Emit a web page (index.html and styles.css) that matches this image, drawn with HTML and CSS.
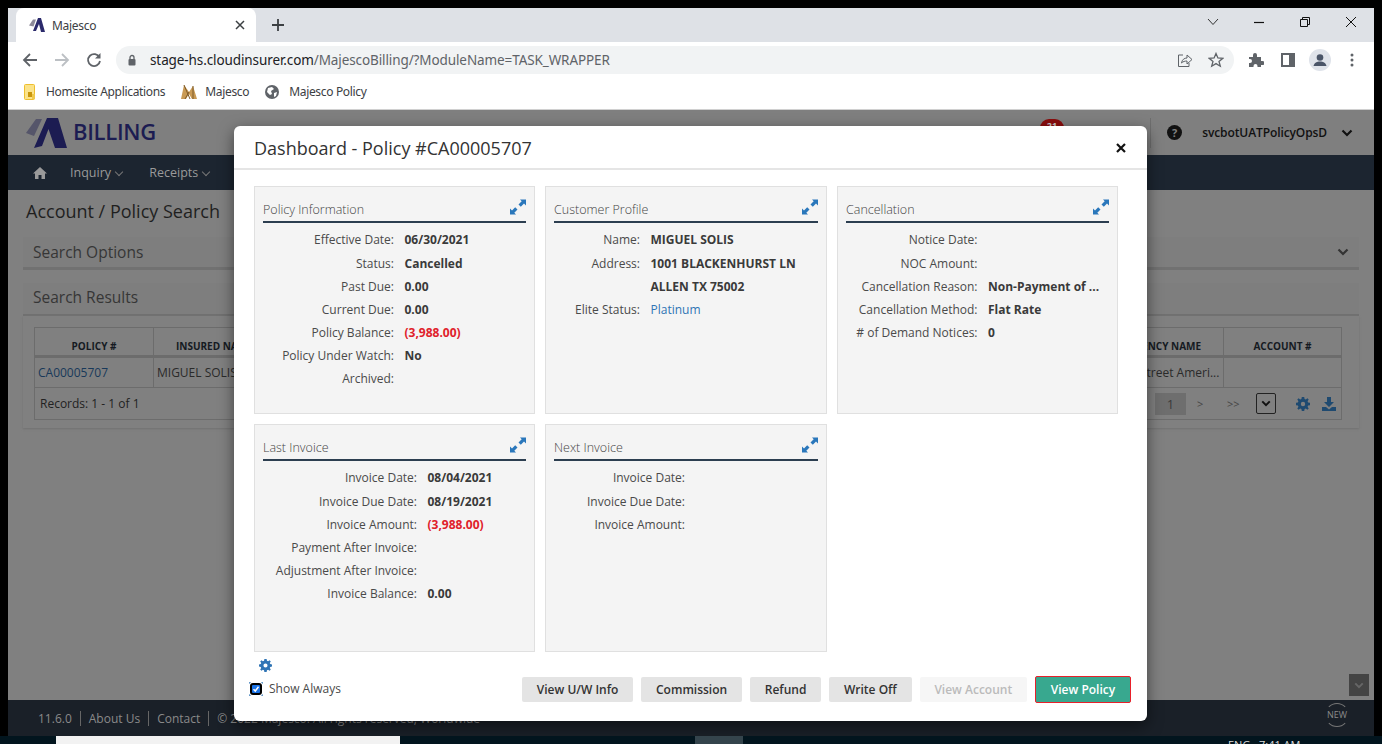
FILE: index.html
```html
<!DOCTYPE html>
<html lang="en">
<head>
    <meta charset="UTF-8">
    <title>Majesco</title>
    <link rel="stylesheet" href="styles.css">
</head>
<body>
<div class="screen">
    <div class="window">
        <div class="tabstrip">
            <div class="tab">
                <svg class="tab-logo" width="18" height="16" viewBox="0 0 18 16"><path d="M1 8.500 5 2.500 8 2.500 5.500 9.500z" fill="#8d8a99"/><path d="M5 14 10 1 13 1 17 15 13 15 11 7 8 14z" fill="#2b2a6b"/></svg>
                <span class="tab-title">Majesco</span>
                <svg class="tab-close" width="10" height="10" viewBox="0 0 10 10"><path d="M1 1 9 9M9 1 1 9" stroke="#3c4043" stroke-width="1.500"/></svg>
            </div>
            <svg class="new-tab" width="14" height="14" viewBox="0 0 14 14"><path d="M7 1V13M1 7H13" stroke="#3c4043" stroke-width="1.800"/></svg>
            <div class="win-controls">
                <svg width="12" height="8" viewBox="0 0 12 8"><path d="M1 1 6 6.500 11 1" stroke="#333" fill="none"/></svg>
                <svg width="12" height="12" viewBox="0 0 12 12"><path d="M1 6.500H11" stroke="#111" stroke-width="1.200"/></svg>
                <svg width="12" height="12" viewBox="0 0 12 12"><path d="M1.500 3.500H8.500V10.500H1.500zM3.500 3.500V1.500H10.500V8.500H8.500" stroke="#111" fill="none"/></svg>
                <svg width="12" height="12" viewBox="0 0 12 12"><path d="M1 1 11 11M11 1 1 11" stroke="#111"/></svg>
            </div>
        </div>
        <div class="toolbar">
            <svg class="nav-btn" width="16" height="16" viewBox="0 0 16 16"><path d="M15 8H2M8 2 2 8l6 6" stroke="#5f6368" stroke-width="1.800" fill="none"/></svg>
            <svg class="nav-btn" width="16" height="16" viewBox="0 0 16 16"><path d="M1 8H14M8 2l6 6-6 6" stroke="#bcc0c4" stroke-width="1.800" fill="none"/></svg>
            <svg class="nav-btn" width="16" height="16" viewBox="0 0 16 16"><path d="M13.500 5.500A6 6 0 1 0 14 9" stroke="#5f6368" stroke-width="1.800" fill="none"/><path d="M14.500 1V6.500H9z" fill="#5f6368"/></svg>
            <div class="omnibox">
                <svg width="10" height="12" viewBox="0 0 10 12"><path d="M3 5V3.500a2 2 0 0 1 4 0V5" stroke="#5f6368" stroke-width="1.300" fill="none"/><rect x="1.500" y="5" width="7" height="6.500" rx="1" fill="#5f6368"/></svg>
                <span class="url"><span class="url-host">stage-hs.cloudinsurer.com</span>/MajescoBilling/?ModuleName=TASK_WRAPPER</span>
                <svg class="omni-share" width="16" height="16" viewBox="0 0 16 16"><path d="M6 3H1.500V14.500H12V11" stroke="#5f6368" fill="none"/><path d="M4.500 11C5 7.500 7.500 6 10 6V3l5 4.500-5 4.500V9C8 9 6 9.500 4.500 11z" stroke="#5f6368" fill="none"/></svg>
                <svg width="16" height="16" viewBox="0 0 16 16"><path d="M8 1.500 9.900 6 14.800 6.300 11 9.400 12.300 14.200 8 11.600 3.700 14.200 5 9.400 1.200 6.300 6.100 6z" stroke="#5f6368" stroke-width="1.300" fill="none"/></svg>
            </div>
            <div class="toolbar-right">
                <svg width="16" height="16" viewBox="0 0 16 16"><path d="M1 5H5V3a2 2 0 0 1 4 0V5h4V9h1.500a2 2 0 0 1 0 4H13v2H9.500v-1a2 2 0 0 0-4 0v1H1V11h1a2 2 0 0 0 0-4H1z" fill="#5f6368"/></svg>
                <svg class="tool-side" width="14" height="14" viewBox="0 0 14 14"><path d="M0 0H14V14H0zM2 2V12H8V2z" fill="#5f6368" fill-rule="evenodd"/></svg>
                <svg class="tool-avatar" width="22" height="22" viewBox="0 0 22 22"><circle cx="11" cy="11" r="11" fill="#dfe3ea"/><circle cx="11" cy="8.500" r="3.300" fill="#4a5568"/><path d="M4.500 17c1-3.500 3.500-4.500 6.500-4.500s5.500 1 6.500 4.500z" fill="#4a5568"/></svg>
                <svg class="tool-menu" width="4" height="14" viewBox="0 0 4 14"><circle cx="2" cy="2" r="1.500" fill="#5f6368"/><circle cx="2" cy="7" r="1.500" fill="#5f6368"/><circle cx="2" cy="12" r="1.500" fill="#5f6368"/></svg>
            </div>
        </div>
        <div class="bookmarks">
            <span class="bookmark">
                <svg class="bm-wide" width="12" height="16" viewBox="0 0 12 16"><rect x="0.500" y="0.500" width="10" height="15" rx="1" fill="#fbe38a" stroke="#eebf2e"/><rect x="4" y="8" width="4" height="5" fill="#c9960c"/><rect x="8" y="10" width="3" height="5" fill="#f0c94a"/></svg>
                Homesite Applications
            </span>
            <span class="bookmark">
                <svg width="16" height="16" viewBox="0 0 16 16"><path d="M0 15 3 1 8 8 12 2 16 15 11 15 8 10 5 15z" fill="#c99a54"/><path d="M3 1 9 15M8 8 4 15M12 2 12 15" stroke="#7d5a2a" fill="none"/></svg>
                Majesco
            </span>
            <span class="bookmark">
                <svg class="bm-wide" width="14" height="14" viewBox="0 0 14 14"><circle cx="7" cy="7" r="7" fill="#5f6368"/><path d="M3 3 7 2 9 4 6 6 7 9 5 10 2 7zM9 8 12 7 11 11 9 12z" fill="#fff"/></svg>
                Majesco Policy
            </span>
        </div>
        <div class="app">
            <header class="app-header">
                <svg width="44" height="32" viewBox="0 0 44 32"><path d="M1 16 11 2 17 2 9 19z" fill="#55556a"/><path d="M9 31 22 1 33 1 42 31 30 31 23.500 12 17 29z" fill="#1c1c52"/></svg>
                <span class="app-name">BILLING</span>
                <span class="header-input input-a"></span>
                <span class="header-input input-b"></span>
                <div class="header-right">
                    <span class="badge">21</span>
                    <span class="divider"></span>
                    <span class="help">?</span>
                    <span class="user">svcbotUATPolicyOpsD</span>
                    <svg width="12" height="8" viewBox="0 0 12 8"><path d="M1.500 1.500 6 6l4.500-4.500" stroke="#111" stroke-width="2.200" fill="none"/></svg>
                </div>
            </header>
            <nav class="app-nav">
                <svg width="14" height="12" viewBox="0 0 14 12"><path d="M7 0 14 6.500H12V12H8.500V8h-3v4H2V6.500H0z" fill="#9a9a9a"/></svg>
                <span class="nav-item">Inquiry <i class="caret"></i></span>
                <span class="nav-item">Receipts <i class="caret"></i></span>
            </nav>
            <main class="app-main">
                <h1 class="page-title">Account / Policy Search</h1>
                <section class="bar bar-options">
                    <span>Search Options</span>
                    <svg width="12" height="8" viewBox="0 0 12 8"><path d="M1.500 1.500 6 6l4.500-4.500" stroke="#333" stroke-width="2.200" fill="none"/></svg>
                </section>
                <section class="bar bar-results"><span>Search Results</span></section>
                <section class="results">
                    <div class="grid">
                        <div class="grid-row grid-head">
                            <div class="cell c-policy">POLICY #</div>
                            <div class="cell c-insured">INSURED NAME</div>
                            <div class="cell c-agency">AGENCY NAME</div>
                            <div class="cell c-account">ACCOUNT #</div>
                        </div>
                        <div class="grid-row grid-body">
                            <div class="cell c-policy link">CA00005707</div>
                            <div class="cell c-insured">MIGUEL SOLIS</div>
                            <div class="cell c-agency">Main Street Ameri...</div>
                            <div class="cell c-account"></div>
                        </div>
                        <div class="grid-foot">
                            <span>Records: 1 - 1 of 1</span>
                            <div class="pager">
                                <span class="page-no">1</span>
                                <span class="page-arrow">&gt;</span>
                                <span class="page-arrow">&gt;&gt;</span>
                                <span class="page-select"><svg width="10" height="7" viewBox="0 0 12 8"><path d="M1.500 1.500 6 6l4.500-4.500" stroke="#111" stroke-width="2.400" fill="none"/></svg></span>
                                <svg width="14" height="14" viewBox="0 0 14 14"><use href="#gear" fill="#1f4a70"/></svg>
                                <svg width="14" height="14" viewBox="0 0 14 14"><path d="M5 0H9V5H12L7 10 2 5H5zM0 10H4L7 12.500 10 10H14V14H0z" fill="#1f4a70"/></svg>
                            </div>
                        </div>
                    </div>
                </section>
            </main>
            <footer class="app-footer">
                <span>11.6.0</span><span>About Us</span><span>Contact</span><span>&copy; 2022 Majesco. All rights reserved, Worldwide</span>
                <span class="new-mark">NEW</span>
            </footer>
            <span class="scroll-top"><svg width="10" height="7" viewBox="0 0 12 8"><path d="M1.500 1.500 6 6l4.500-4.500" stroke="#666" stroke-width="2.400" fill="none"/></svg></span>

            <div class="modal">
                <div class="modal-head">
                    <h2>Dashboard - Policy #CA00005707</h2>
                    <svg width="10" height="10" viewBox="0 0 10 10"><path d="M1 1 9 9M9 1 1 9" stroke="#111" stroke-width="2.200"/></svg>
                </div>
                <div class="panels">
                    <div class="panel">
                        <div class="panel-title">Policy Information<svg width="16" height="16" viewBox="0 0 16 16"><use href="#expand"/></svg></div>
                        <dl class="facts w-policy">
                            <dt>Effective Date:</dt><dd>06/30/2021</dd>
                            <dt>Status:</dt><dd>Cancelled</dd>
                            <dt>Past Due:</dt><dd>0.00</dd>
                            <dt>Current Due:</dt><dd>0.00</dd>
                            <dt>Policy Balance:</dt><dd class="neg">(3,988.00)</dd>
                            <dt>Policy Under Watch:</dt><dd>No</dd>
                            <dt>Archived:</dt><dd></dd>
                        </dl>
                    </div>
                    <div class="panel">
                        <div class="panel-title">Customer Profile<svg width="16" height="16" viewBox="0 0 16 16"><use href="#expand"/></svg></div>
                        <dl class="facts w-customer">
                            <dt>Name:</dt><dd>MIGUEL SOLIS</dd>
                            <dt>Address:</dt><dd>1001 BLACKENHURST LN</dd>
                            <dt></dt><dd>ALLEN TX 75002</dd>
                            <dt>Elite Status:</dt><dd class="plain">Platinum</dd>
                        </dl>
                    </div>
                    <div class="panel">
                        <div class="panel-title">Cancellation<svg width="16" height="16" viewBox="0 0 16 16"><use href="#expand"/></svg></div>
                        <dl class="facts w-cancel">
                            <dt>Notice Date:</dt><dd></dd>
                            <dt>NOC Amount:</dt><dd></dd>
                            <dt>Cancellation Reason:</dt><dd>Non-Payment of ...</dd>
                            <dt>Cancellation Method:</dt><dd>Flat Rate</dd>
                            <dt># of Demand Notices:</dt><dd>0</dd>
                        </dl>
                    </div>
                    <div class="panel">
                        <div class="panel-title">Last Invoice<svg width="16" height="16" viewBox="0 0 16 16"><use href="#expand"/></svg></div>
                        <dl class="facts w-invoice">
                            <dt>Invoice Date:</dt><dd>08/04/2021</dd>
                            <dt>Invoice Due Date:</dt><dd>08/19/2021</dd>
                            <dt>Invoice Amount:</dt><dd class="neg">(3,988.00)</dd>
                            <dt>Payment After Invoice:</dt><dd></dd>
                            <dt>Adjustment After Invoice:</dt><dd></dd>
                            <dt>Invoice Balance:</dt><dd>0.00</dd>
                        </dl>
                    </div>
                    <div class="panel">
                        <div class="panel-title">Next Invoice<svg width="16" height="16" viewBox="0 0 16 16"><use href="#expand"/></svg></div>
                        <dl class="facts w-next">
                            <dt>Invoice Date:</dt><dd></dd>
                            <dt>Invoice Due Date:</dt><dd></dd>
                            <dt>Invoice Amount:</dt><dd></dd>
                        </dl>
                    </div>
                </div>
                <div class="modal-foot">
                    <div class="foot-left">
                        <svg class="foot-gear" width="13" height="13" viewBox="0 0 14 14"><use href="#gear" fill="#2f74b5"/></svg>
                        <label class="show-always">
                            <svg class="check" width="14" height="14" viewBox="0 0 14 14">
                                <path d="M0 2V0H2M12 0H14V2M14 12V14H12M2 14H0V12" stroke="#2f74b5" fill="none"/>
                                <rect x="1" y="1" width="12" height="12" rx="3" fill="#000"/>
                                <rect x="3" y="3" width="8" height="8" rx="1" fill="#1a73e8"/>
                                <path d="M4.500 7.200 6.300 9 9.500 4.800" stroke="#fff" stroke-width="1.500" fill="none"/>
                            </svg>
                            Show Always
                        </label>
                    </div>
                    <div class="foot-buttons">
                        <button class="btn">View U/W Info</button>
                        <button class="btn">Commission</button>
                        <button class="btn">Refund</button>
                        <button class="btn">Write Off</button>
                        <button class="btn btn-disabled">View Account</button>
                        <button class="btn btn-primary">View Policy</button>
                    </div>
                </div>
            </div>
        </div>
    </div>
    <div class="taskbar">
        <span class="task-search"></span>
        <span class="task-active"></span>
        <span class="task-clock">ENG &nbsp; 7:41 AM</span>
    </div>
</div>

<svg class="sprites" width="0" height="0">
    <symbol id="expand" viewBox="0 0 16 16">
        <path d="M10 0.500H16V6.500L14 4.500 10.800 7.700 8.500 5.400 11.700 2.200zM6 15.500H0V9.500L2 11.500 5.200 8.300 7.500 10.600 4.300 13.800z" fill="#2a77bb"/>
    </symbol>
    <symbol id="gear" viewBox="0 0 14 14">
        <path fill-rule="evenodd" d="M5.800 0H8.200L8.600 1.900 9.800 2.400 11.400 1.300 12.700 2.600 11.600 4.200 12.100 5.400 14 5.800V8.200L12.100 8.600 11.600 9.800 12.700 11.400 11.400 12.700 9.800 11.600 8.600 12.100 8.200 14H5.800L5.400 12.100 4.200 11.600 2.600 12.700 1.300 11.400 2.400 9.800 1.900 8.600 0 8.200V5.800L1.900 5.400 2.400 4.200 1.300 2.600 2.600 1.300 4.200 2.400 5.400 1.900zM7 4.800A2.200 2.200 0 1 0 7 9.200 2.200 2.200 0 1 0 7 4.800z"/>
    </symbol>
</svg>
</body>
</html>
```

FILE: styles.css
```css
* {
    box-sizing: border-box;
}

html,
body {
    margin: 0;
    padding: 0;
    height: 100%;
    overflow: hidden;
    background-color: #000;
}

body {
    font-family: "Open Sans", Arial, sans-serif;
    font-size: 12px;
    color: #333;
}

.sprites {
    position: absolute;
}

.screen {
    width: 1382px;
    height: 744px;
    display: flex;
    flex-direction: column;
    padding-top: 8px;
}

.window {
    width: 1366px;
    height: 728px;
    margin-left: 8px;
    display: flex;
    flex-direction: column;
    flex: none;
}

/* browser chrome */
.tabstrip {
    height: 34px;
    background-color: #dee1e6;
    display: flex;
    align-items: flex-end;
    padding-left: 8px;
    flex: none;
}

.tab {
    width: 240px;
    height: 34px;
    background-color: #fff;
    border-radius: 8px 8px 0 0;
    display: flex;
    align-items: center;
    padding: 0 11px 0 12px;
    font-size: 12px;
    color: #3c4043;
}

.tab-logo {
    margin-right: 6px;
}

.tab-title {
    flex: 1;
    font-family: "Noto Sans", sans-serif;
    letter-spacing: -0.300px;
}

.new-tab {
    margin: 0 0 10px 15px;
}

.win-controls {
    margin-left: auto;
    display: flex;
    align-items: center;
    gap: 34px;
    height: 28px;
    padding-right: 17px;
    align-self: flex-start;
}

.toolbar {
    height: 40px;
    background-color: #fff;
    display: flex;
    align-items: center;
    padding: 0 0 4px 14px;
    gap: 16px;
    flex: none;
}

.omnibox {
    width: 1118px;
    height: 28px;
    margin-left: -2px;
    background-color: #f1f3f4;
    border-radius: 14px;
    display: flex;
    align-items: center;
    padding: 0 10px 0 11px;
    gap: 10px;
}

.url {
    flex: 1;
    margin-left: 3px;
    font-family: "Noto Sans", sans-serif;
    font-size: 13.500px;
    color: #5f6368;
    letter-spacing: -0.100px;
}

.url-host {
    color: #202124;
}

.omni-share {
    margin-right: 5px;
}

.toolbar-right {
    display: flex;
    align-items: center;
    margin-left: -2px;
}

.tool-side {
    margin-left: 17px;
}

.tool-avatar {
    margin-left: 14px;
}

.tool-menu {
    margin-left: 19px;
}

.bookmarks {
    height: 28px;
    background-color: #fff;
    display: flex;
    align-items: center;
    padding: 0 0 8px 16px;
    gap: 16px;
    flex: none;
    border-bottom: 1px solid #d0d0d0;
}

.bookmark {
    display: flex;
    align-items: center;
    gap: 8px;
    font-family: "Noto Sans", sans-serif;
    font-size: 12px;
    letter-spacing: -0.330px;
    color: #3c4043;
}

.bm-wide {
    margin-right: 2px;
}

/* app behind the dialog, dimmed */
.app {
    position: relative;
    flex: 1;
    display: flex;
    flex-direction: column;
    background-color: #808080;
    overflow: hidden;
}

.app-header {
    height: 45px;
    flex: none;
    background-color: #7f7f7f;
    display: flex;
    align-items: center;
    padding-left: 17px;
}

.app-name {
    font-size: 22px;
    font-weight: 600;
    color: #1c1c52;
    margin: 0 0 4px 4px;
    letter-spacing: -0.300px;
}

.header-input {
    height: 30px;
    margin-top: 26px;
    border: 1px solid #707070;
}

.input-a {
    width: 120px;
    margin-left: 466px;
}

.input-b {
    width: 192px;
    margin-left: 6px;
}

.header-right {
    margin-left: auto;
    display: flex;
    align-items: center;
    padding-right: 21px;
}

.badge {
    position: absolute;
    left: 1032px;
    top: 9px;
    width: 24px;
    height: 18px;
    background-color: #8a0d0d;
    border-radius: 9px;
    color: #ccc;
    font-size: 9px;
    font-weight: 700;
    text-align: center;
}

.divider {
    width: 1px;
    height: 30px;
    background-color: #6e6e6e;
    margin-right: 16px;
}

.help {
    width: 15px;
    height: 15px;
    background-color: #111;
    color: #808080;
    border-radius: 50%;
    font-size: 11px;
    font-weight: 700;
    text-align: center;
    line-height: 15px;
    margin-right: 20px;
}

.user {
    font-weight: 600;
    color: #111;
    margin-right: 14px;
    letter-spacing: -0.100px;
}

.app-nav {
    height: 35px;
    flex: none;
    background-color: #1c2530;
    display: flex;
    align-items: center;
    padding-left: 25px;
    color: #9a9a9a;
    font-size: 12.500px;
}

.nav-item {
    margin-left: 23px;
    margin-right: 2px;
}

.caret {
    display: inline-block;
    width: 6px;
    height: 6px;
    border-right: 1.500px solid #777;
    border-bottom: 1.500px solid #777;
    transform: rotate(45deg);
    margin: 0 2px 2px 2px;
}

.app-main {
    flex: 1;
    padding: 0 15px;
    background-color: #808080;
}

.page-title {
    margin: 0;
    font-size: 18px;
    font-weight: 400;
    line-height: 24px;
    padding: 9px 0 0 3px;
    color: #1f1f1f;
}

.bar {
    height: 33px;
    font-size: 15.500px;
    color: #363636;
    padding: 0 10px;
    display: flex;
    align-items: center;
    justify-content: space-between;
    background-color: #7e7e7e;
    border-bottom: 3px solid #717171;
}

.bar-options {
    margin-top: 14px;
}

.bar-results {
    margin-top: 13px;
    padding-bottom: 4px;
    border-bottom-width: 2px;
}

.results {
    height: 112px;
    padding: 11px 11px 0 11px;
    box-shadow: 0 1px 2px #707070;
}

.grid {
    width: 1308px;
    border: 1px solid #6c6c6c;
}

.grid-row {
    display: flex;
}

.grid-head {
    height: 30px;
    border-bottom: 3px solid #6c6c6c;
    font-size: 10px;
    font-weight: 700;
    color: #151a22;
    text-align: center;
}

.grid-body {
    height: 30px;
    border-bottom: 1px solid #6c6c6c;
    font-size: 12px;
    color: #2a2a2a;
}

.cell {
    border-right: 1px solid #6c6c6c;
    white-space: nowrap;
    overflow: hidden;
    padding: 0 3px;
    display: flex;
    align-items: center;
}

.grid-head .cell {
    justify-content: center;
    padding-top: 8px;
}

.c-policy {
    width: 119px;
}

.c-insured {
    width: 952px;
}

.grid-head .c-insured {
    justify-content: flex-start;
    padding-left: 22px;
}

.c-agency {
    width: 118px;
}

.c-account {
    flex: 1;
    border-right: none;
}

.link {
    color: #18395a;
}

.grid-foot {
    height: 31px;
    display: flex;
    align-items: center;
    justify-content: space-between;
    padding: 0 5px;
    color: #222;
}

.pager {
    display: flex;
    align-items: center;
    color: #444;
}

.page-no {
    width: 31px;
    height: 22px;
    background-color: #6e6e6e;
    text-align: center;
    line-height: 22px;
    color: #3a3a3a;
    font-size: 13px;
}

.page-arrow {
    margin-left: 11px;
    width: 19px;
    font-size: 11px;
}

.page-arrow + .page-arrow {
    width: 22px;
}

.page-select {
    width: 20px;
    height: 21px;
    border: 1px solid #222;
    border-radius: 2px;
    display: flex;
    align-items: center;
    justify-content: center;
    margin: 0 20px 0 7px;
}

.pager > svg:last-child {
    margin-left: 12px;
}

.app-footer {
    height: 36px;
    flex: none;
    background-color: #1a2028;
    display: flex;
    align-items: center;
    padding-left: 30px;
    color: #8a8a8a;
    font-size: 12px;
    position: relative;
}

.app-footer span {
    padding: 0 8px;
    border-left: 1px solid #666;
    line-height: 15px;
}

.app-footer span:first-child {
    border-left: none;
    padding-left: 0;
}

.app-footer .new-mark {
    position: absolute;
    right: 25px;
    top: 3px;
    width: 24px;
    height: 24px;
    padding: 0;
    border: 1px solid #777;
    border-left-color: transparent;
    border-right-color: transparent;
    border-radius: 50%;
    font-size: 9px;
    line-height: 22px;
    text-align: center;
}

.scroll-top {
    position: absolute;
    right: 5px;
    bottom: 40px;
    width: 20px;
    height: 22px;
    background-color: #444;
    display: flex;
    align-items: center;
    justify-content: center;
}

/* dialog */
.modal {
    position: absolute;
    left: 226px;
    top: 16px;
    width: 913px;
    height: 595px;
    background-color: #fff;
    border-radius: 6px;
    box-shadow: 0 5px 15px rgba(0, 0, 0, 0.5);
    display: flex;
    flex-direction: column;
}

.modal-head {
    height: 44px;
    flex: none;
    border-bottom: 2px solid #e5e5e5;
    display: flex;
    align-items: center;
    justify-content: space-between;
    padding: 2px 21px 0 20px;
}

.modal-head h2 {
    margin: 0;
    font-size: 18px;
    font-weight: 400;
    color: #333;
}

.panels {
    display: grid;
    grid-template-columns: 281px 282px 281px;
    grid-auto-rows: 228px;
    gap: 10px;
    padding: 16px 0 0 20px;
    flex: none;
}

.panel {
    background-color: #f4f4f4;
    border: 1px solid #e0e0e0;
    padding: 14px 8px 0 8px;
}

.panel-title {
    height: 22px;
    border-bottom: 2px solid #2c3e50;
    font-size: 12.500px;
    font-weight: 300;
    color: #444;
    line-height: 17px;
    position: relative;
}

.panel-title svg {
    position: absolute;
    right: 0;
    top: -2px;
}

.facts {
    display: grid;
    grid-template-rows: 24px;
    grid-auto-rows: 23px;
    margin: 5px 0 0 0;
    line-height: 23px;
    font-size: 12px;
}

.w-policy {
    grid-template-columns: 131px 1fr;
}

.w-customer {
    grid-template-columns: 86px 1fr;
}

.w-cancel {
    grid-template-columns: 131.500px 1fr;
}

.w-invoice {
    grid-template-columns: 154px 1fr;
}

.w-next {
    grid-template-columns: 131px 1fr;
}

.facts dt {
    text-align: right;
    color: #4a4a4a;
}

.facts dd {
    margin: 0 0 0 10.500px;
    font-weight: 700;
    color: #3a3a3a;
    white-space: nowrap;
}

.facts .neg {
    color: #e0212b;
}

.facts .plain {
    font-weight: 400;
    color: #2f74b5;
}

.modal-foot {
    flex: 1;
    display: flex;
    justify-content: space-between;
    padding: 0 16px 19px 15px;
}

.foot-left {
    display: flex;
    flex-direction: column;
    padding-top: 7px;
}

.foot-gear {
    margin-left: 10px;
}

.show-always {
    display: flex;
    align-items: center;
    margin-top: 8px;
    color: #4a4a4a;
    font-size: 12px;
}

.check {
    margin-right: 6px;
}

.foot-buttons {
    display: flex;
    align-self: flex-end;
    align-items: flex-end;
    gap: 8px;
}

.btn {
    height: 25px;
    border: none;
    border-radius: 2px;
    background-color: #e4e4e4;
    color: #333;
    font-family: "Open Sans", Arial, sans-serif;
    font-size: 12px;
    font-weight: 600;
    padding: 0 14.800px;
}

.btn-disabled {
    background-color: #f6f6f6;
    color: #bbb;
}

.btn-primary {
    height: 27px;
    margin-bottom: -1px;
    background-color: #38a88f;
    color: #fff;
    border: 1px solid #e8202a;
    font-weight: 600;
}

/* desktop taskbar under the window */
.taskbar {
    position: relative;
    height: 8px;
    flex: none;
    background-color: #02151e;
    overflow: hidden;
}

.task-search {
    position: absolute;
    left: 56px;
    top: 0;
    width: 344px;
    height: 8px;
    background-color: #f2f2f2;
}

.task-active {
    position: absolute;
    left: 695px;
    top: 0;
    width: 48px;
    height: 8px;
    background-color: #34444c;
}

.task-clock {
    position: absolute;
    left: 1228px;
    top: 2px;
    color: #ddd;
    font-size: 11px;
    line-height: 14px;
}
```
